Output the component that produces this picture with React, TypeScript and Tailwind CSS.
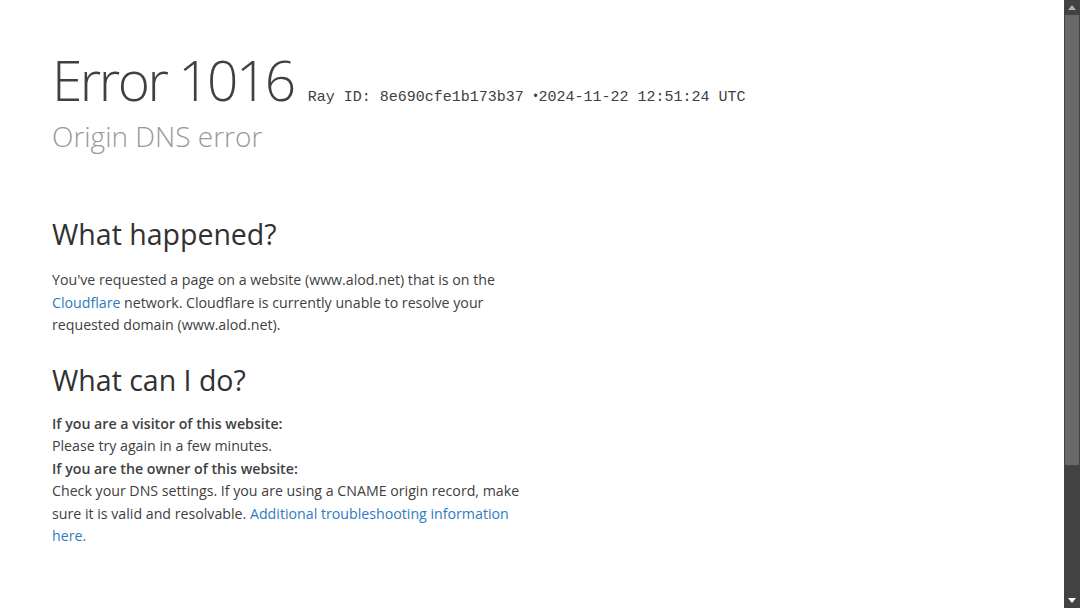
export default function App() {
  const sans = { fontFamily: '"Open Sans", "Noto Sans", sans-serif' };
  return (
    <div className="flex h-[608px] w-[1080px] overflow-hidden bg-white">
      <div className="flex-1 pl-[52px] pt-[52px] text-[#404040]" style={sans}>
        <div className="flex items-baseline whitespace-nowrap">
          <h1 className="text-[55px] font-light leading-none tracking-[-2.5px] text-[#404040]">Error 1016</h1>
          <span className="ml-[14px] text-[15px] text-[#404040]" style={{ fontFamily: '"Liberation Mono", monospace' }}>
            Ray ID: 8e690cfe1b173b37 <span style={sans}>•</span>2024-11-22 12:51:24 UTC
          </span>
        </div>
        <h2 className="mt-[10px] text-[28px] font-light leading-[1.2] text-[#999999]">Origin DNS error</h2>

        <section className="mt-[64px] w-[480px]">
          <h2 className="text-[28.5px] font-normal leading-[1.2] text-[#313131]">What happened?</h2>
          <p className="mt-[18px] whitespace-nowrap text-[14.2px] leading-[22.5px] text-[#404040]">
            You've requested a page on a website (www.alod.net) that is on the
            <br />
            <a className="text-[#2f7bbf]">Cloudflare</a> network. Cloudflare is currently unable to resolve your
            <br />
            requested domain (www.alod.net).
          </p>
        </section>

        <section className="mt-[26px] w-[480px]">
          <h2 className="text-[28.5px] font-normal leading-[1.2] text-[#313131]">What can I do?</h2>
          <div className="mt-[16px] whitespace-nowrap text-[14.2px] leading-[22.5px] text-[#404040]">
            <p className="font-semibold">If you are a visitor of this website:</p>
            <p>Please try again in a few minutes.</p>
            <p className="font-semibold">If you are the owner of this website:</p>
            <p>
              Check your DNS settings. If you are using a CNAME origin record, make
              <br />
              sure it is valid and resolvable. <a className="text-[#2f7bbf]">Additional troubleshooting information</a>
              <br />
              <a className="text-[#2f7bbf]">here.</a>
            </p>
          </div>
        </section>
      </div>
      <div className="flex w-[16px] flex-col items-center bg-[#424242]">
        <div className="flex h-[15px] items-center justify-center">
          <svg width="8" height="5" viewBox="0 0 8 5"><path d="M0 5 L4 0 L8 5 Z" fill="#b0b0b0" /></svg>
        </div>
        <div className="h-[450px] w-[14px] bg-[#686868]" />
        <div className="flex-1" />
        <div className="flex h-[15px] items-center justify-center">
          <svg width="8" height="5" viewBox="0 0 8 5"><path d="M0 0 L4 5 L8 0 Z" fill="#ffffff" /></svg>
        </div>
      </div>
    </div>
  );
}
